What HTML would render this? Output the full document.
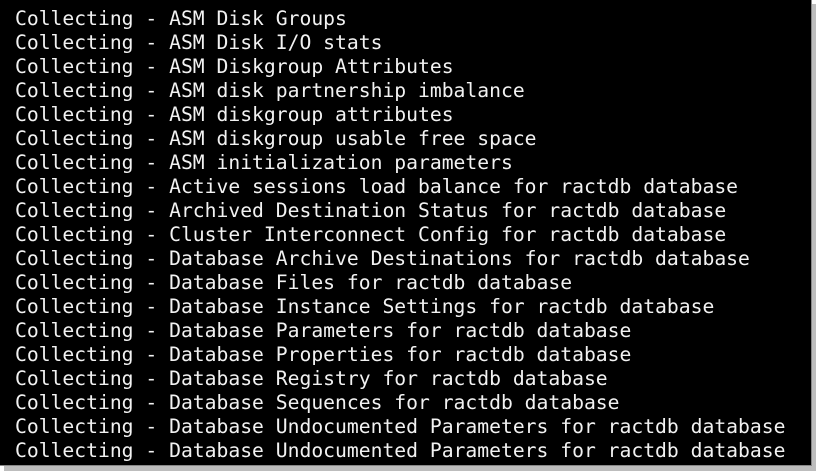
<!DOCTYPE html>
<html><head><style>
html,body{margin:0;padding:0;background:#fff;}
.wrap{position:relative;width:818px;height:473px;background:#fff;overflow:hidden;}
.sh{position:absolute;left:4px;top:4px;width:812px;height:467px;background:#bdbdbd;}
.term{position:absolute;left:0;top:0;width:812px;height:466px;background:#000;border-right:1px solid #888;border-bottom:1px solid #888;box-sizing:border-box;}
pre{margin:0;position:absolute;left:15px;top:7px;font-family:"DejaVu Sans Mono","Liberation Mono",monospace;font-size:19.7px;letter-spacing:0px;line-height:24px;color:#f2f2f2;}
</style></head><body><div class="wrap"><div class="sh"></div><div class="term"><pre>Collecting - ASM Disk Groups
Collecting - ASM Disk I/O stats
Collecting - ASM Diskgroup Attributes
Collecting - ASM disk partnership imbalance
Collecting - ASM diskgroup attributes
Collecting - ASM diskgroup usable free space
Collecting - ASM initialization parameters
Collecting - Active sessions load balance for ractdb database
Collecting - Archived Destination Status for ractdb database
Collecting - Cluster Interconnect Config for ractdb database
Collecting - Database Archive Destinations for ractdb database
Collecting - Database Files for ractdb database
Collecting - Database Instance Settings for ractdb database
Collecting - Database Parameters for ractdb database
Collecting - Database Properties for ractdb database
Collecting - Database Registry for ractdb database
Collecting - Database Sequences for ractdb database
Collecting - Database Undocumented Parameters for ractdb database
Collecting - Database Undocumented Parameters for ractdb database</pre></div></div></body></html>
